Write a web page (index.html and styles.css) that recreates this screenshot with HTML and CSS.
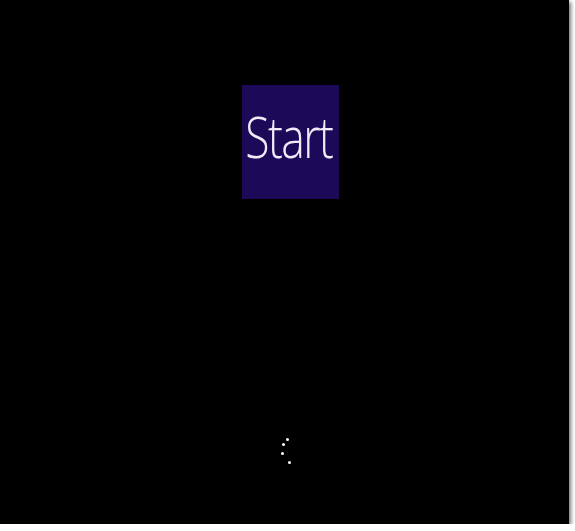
FILE: index.html
```html
<!DOCTYPE html>
<html>
<head>
<meta charset="utf-8">
<link rel="stylesheet" href="styles.css">
</head>
<body>
<div class="screen">
  <div class="tile"><span class="tile-label">Start</span></div>
  <div class="spinner">
    <span class="dot d1"></span>
    <span class="dot d2"></span>
    <span class="dot d3"></span>
    <span class="dot d4"></span>
  </div>
</div>
</body>
</html>
```
FILE: styles.css
```css
html, body {
  margin: 0;
  padding: 0;
  background: #ffffff;
}
.screen {
  width: 569px;
  height: 524px;
  background: #000;
  box-shadow: 2px 2px 4px rgba(0,0,0,0.55);
  display: flex;
  flex-direction: column;
  padding-left: 242px;
  box-sizing: border-box;
}
.tile {
  margin-top: 85px;
  width: 97px;
  height: 114px;
  background: #1c0a58;
  display: flex;
  align-items: center;
  justify-content: center;
}
.tile-label {
  font-family: "Open Sans", "Noto Sans", sans-serif;
  font-weight: 300;
  font-size: 57px;
  color: #efecf8;
  letter-spacing: -2px;
  transform: scaleX(0.78);
  display: inline-block;
  line-height: 1;
  margin-bottom: 12px;
  margin-left: -3px;
}
.spinner {
  position: relative;
  margin-top: 238px;
  margin-left: 38px;
  width: 12px;
  height: 30px;
}
.dot {
  position: absolute;
  width: 3px;
  height: 3px;
  border-radius: 50%;
  background: #fff;
}
.d1 { left: 6px; top: 1px; }
.d2 { left: 2px; top: 6px; }
.d3 { left: 1px; top: 15px; }
.d4 { left: 8px; top: 24px; }
```
